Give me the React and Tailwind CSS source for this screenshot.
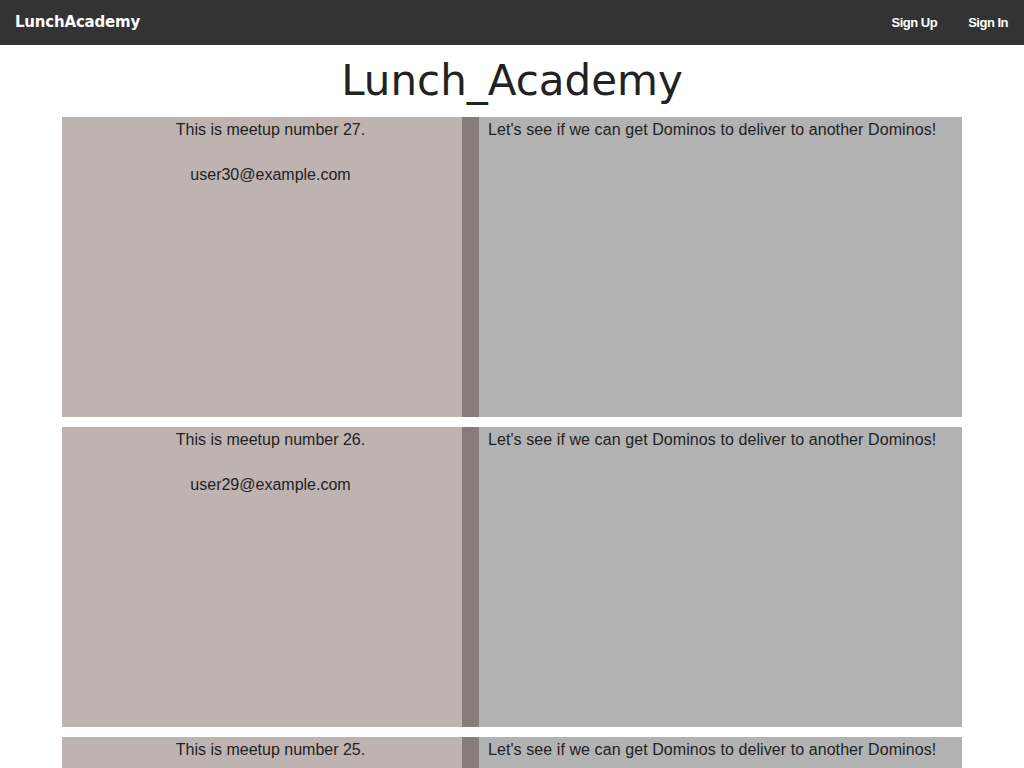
export default function App() {
  const meetups = [
    { n: 27, user: "user30@example.com" },
    { n: 26, user: "user29@example.com" },
    { n: 25, user: "user28@example.com" },
  ];
  return (
    <div className="min-h-screen bg-white text-[#222]" style={{ fontFamily: '"Liberation Sans", Arial, sans-serif' }}>
      <nav className="h-[45px] bg-[#333333] flex items-center justify-between pl-[15px] pr-[16px]">
        <span className="text-white font-bold text-[15px] tracking-[-0.2px]" style={{ fontFamily: '"DejaVu Sans", Verdana, sans-serif' }}>
          LunchAcademy
        </span>
        <div className="flex items-center gap-[31px] text-white text-[13px] font-bold tracking-[-0.5px] pt-[1px]">
          <span>Sign Up</span>
          <span>Sign In</span>
        </div>
      </nav>
      <h1
        className="text-center text-[42px] leading-[72px] text-[#222] h-[72px]"
        style={{ fontFamily: '"DejaVu Sans", Verdana, sans-serif' }}
      >
        Lunch_Academy
      </h1>
      <div className="w-[900px] mx-auto flex flex-col gap-[10px]">
        {meetups.map((m) => (
          <div key={m.n} className="flex h-[300px] text-[16px] leading-[20px]">
            <div className="w-[400px] bg-[#bfb3b2] pl-[17px] pt-[3px] text-center flex flex-col gap-[25px]">
              <p>This is meetup number {m.n}.</p>
              <p>{m.user}</p>
            </div>
            <div className="w-[17px] bg-[#877b7b]" />
            <div className="flex-1 bg-[#b2b2b2] pl-[9px] pt-[3px]">
              <p className="tracking-[0.08px]">Let's see if we can get Dominos to deliver to another Dominos!</p>
            </div>
          </div>
        ))}
      </div>
    </div>
  );
}
